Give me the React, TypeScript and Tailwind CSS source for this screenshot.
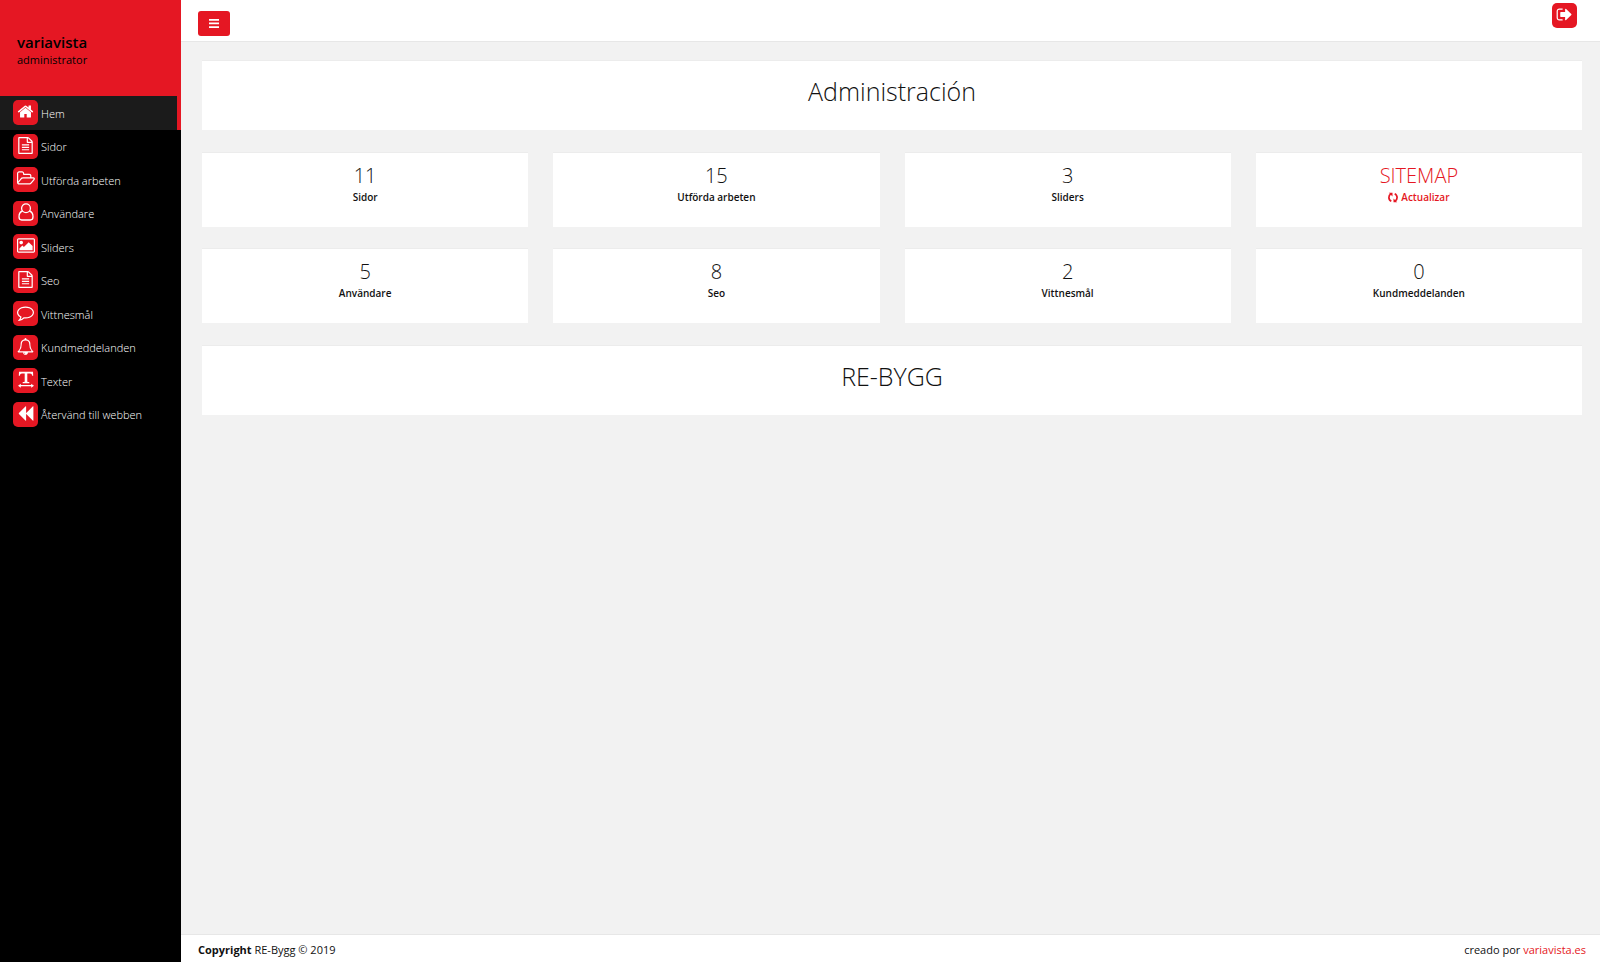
import type { ReactNode } from "react";

function Glyph({ d, box = "0 0 1792 1792", className = "" }: { d: string; box?: string; className?: string }) {
  return (
    <svg viewBox={box} className={`fill-current ${className}`} aria-hidden="true">
      <path d={d} />
    </svg>
  );
}

const FILE =
  "M1596 380q28 28 48 76t20 88v1152q0 40-28 68t-68 28h-1344q-40 0-68-28t-28-68v-1600q0-40 28-68t68-28h896q40 0 88 20t76 48zm-444-244v376h376q-10-29-22-41l-313-313q-12-12-41-22zm384 1528v-1024h-416q-40 0-68-28t-28-68v-416h-768v1536h1280zm-1024-864q0-14 9-23t23-9h704q14 0 23 9t9 23v64q0 14-9 23t-23 9h-704q-14 0-23-9t-9-23v-64zm736 224q14 0 23 9t9 23v64q0 14-9 23t-23 9h-704q-14 0-23-9t-9-23v-64q0-14 9-23t23-9h704zm0 256q14 0 23 9t9 23v64q0 14-9 23t-23 9h-704q-14 0-23-9t-9-23v-64q0-14 9-23t23-9h704z";
const HOME =
  "M1472 992v480q0 26-19 45t-45 19h-384v-384h-256v384h-384q-26 0-45-19t-19-45v-480q0-1 .5-3t.5-3l575-474 575 474q1 2 1 6zm223-69l-62 74q-8 9-21 11h-3q-13 0-21-7l-692-577-692 577q-12 8-24 7-13-2-21-11l-62-74q-8-10-7-23.5t11-21.5l719-599q32-26 76-26t76 26l244 204v-195q0-14 9-23t23-9h192q14 0 23 9t9 23v408l219 182q10 8 11 21.5t-7 23.5z";
const FOLDER =
  "M1845 931q0-35-53-35h-1088q-40 0-85.5 21.5t-71.5 52.5l-294 363q-18 24-18 40 0 35 53 35h1088q40 0 86-22t71-53l294-363q18-22 18-39zm-1141-163h768v-160q0-40-28-68t-68-28h-576q-40 0-68-28t-28-68v-64q0-40-28-68t-68-28h-320q-40 0-68 28t-28 68v853l256-315q44-53 116-87.5t140-34.5zm1269 163q0 62-46 120l-295 363q-43 53-116 87.5t-140 34.5h-1088q-92 0-158-66t-66-158v-960q0-92 66-158t158-66h320q92 0 158 66t66 158v32h544q92 0 158 66t66 158v160h192q54 0 99 24.5t67 70.5q15 32 15 68z";
const IMAGE =
  "M576 576q0 80-56 136t-136 56-136-56-56-136 56-136 136-56 136 56 56 136zm1024 384v448h-1408v-192l320-320 160 160 512-512zm96-704h-1600q-13 0-22.5 9.5t-9.5 22.5v1216q0 13 9.5 22.5t22.5 9.5h1600q13 0 22.5-9.5t9.5-22.5v-1216q0-13-9.5-22.5t-22.5-9.5zm160 32v1216q0 66-47 113t-113 47h-1600q-66 0-113-47t-47-113v-1216q0-66 47-113t113-47h1600q66 0 113 47t47 113z";
const COMMENT =
  "M896 384q-204 0-381.5 69.5t-282 187.5-104.5 255q0 112 71.5 213.5t201.5 175.5l87 50-27 96q-24 91-70 172 152-63 275-171l43-38 57 6q69 8 130 8 204 0 381.5-69.5t282-187.5 104.5-255-104.5-255-282-187.5-381.5-69.5zm896 512q0 174-120 321.5t-326 233-450 85.5q-70 0-145-8-198 175-460 242-49 14-114 22h-5q-15 0-27-10.5t-16-27.5v-1q-3-4-.5-12t2-10 4.5-9.5l6-9 7-8.5 8-9q7-8 31-34.5t34.5-38 31-39.5 32.5-51 27-59 26-76q-157-89-247.5-220t-90.5-281q0-174 120-321.5t326-233 450-85.5 450 85.5 326 233 120 321.5z";
const BELL =
  "M912 1696q0-16-16-16-59 0-101.5-42.5t-42.5-101.5q0-16-16-16t-16 16q0 73 51.5 124.5t124.5 51.5q16 0 16-16zm-666-288h1300q-266-300-266-832 0-51-24-105t-69-103-121.5-80.5-169.5-31.5-169.5 31.5-121.5 80.5-69 103-24 105q0 532-266 832zm1482 0q0 52-38 90t-90 38h-448q0 106-75 181t-181 75-181-75-75-181h-448q-52 0-90-38t-38-90q50-42 91-88t85-119.5 74.5-158.5 50-206 19.5-260q0-152 117-282.5t307-158.5q-8-19-8-39 0-40 28-68t68-28 68 28 28 68q0 20-8 39 190 28 307 158.5t117 282.5q0 139 19.5 260t50 206 74.5 158.5 85 119.5 91 88z";
const BACKWARD =
  "M1683 141q19-19 32-13t13 32v1472q0 26-13 32t-32-13l-710-710q-9-9-13-19v710q0 26-13 32t-32-13l-710-710q-19-19-19-45t19-45l710-710q19-19 32-13t13 32v710q4-10 13-19z";
const SIGN_OUT =
  "M704 1440q0 4 1 20t.5 26.5-3 23.5-10 19.5-20.5 6.5h-320q-119 0-203.5-84.5t-84.5-203.5v-704q0-119 84.5-203.5t203.5-84.5h320q13 0 22.5 9.5t9.5 22.5q0 4 1 20t.5 26.5-3 23.5-10 19.5-20.5 6.5h-320q-66 0-113 47t-47 113v704q0 66 47 113t113 47h312l11.5 1 11.5 3 8 5.5 7 9 2 13.5zm928-544q0 26-19 45l-544 544q-19 19-45 19t-45-19-19-45v-288h-448q-26 0-45-19t-19-45v-384q0-26 19-45t45-19h448v-288q0-26 19-45t45-19 45 19l544 544q19 19 19 45z";

function UserIcon() {
  return (
    <svg viewBox="0 0 16 18" className="h-[18px] w-4 fill-none stroke-current stroke-[1.3]" aria-hidden="true">
      <circle cx="8" cy="5.2" r="4.4" />
      <path d="M4.6 8C2.4 8.6 1 11 1 13.8c0 1.9 1.1 3.2 2.7 3.2h8.6c1.6 0 2.7-1.3 2.7-3.2 0-2.8-1.4-5.200-3.600-5.800" />
    </svg>
  );
}

function TextWidthIcon() {
  return (
    <svg viewBox="0 0 16 17" className="h-[17px] w-4 fill-current" aria-hidden="true">
      <path d="M1 .8h14l.2 4h-1c-.4-1.600-.8-2.300-2.200-2.300H9.300v7.700c0 .6.600.8 2 .9v1.100H4.700v-1.100c1.400-.1 2-.3 2-.9V2.500H4c-1.400 0-1.800.7-2.200 2.300h-1z" />
      <path d="M0 14.700l2.800-2v1.400h10.400v-1.400l2.800 2-2.800 2v-1.400H2.800v1.400z" />
    </svg>
  );
}

function SyncIcon() {
  return (
    <svg viewBox="0 0 10 11" className="h-[11px] w-2.5 fill-none stroke-current stroke-[1.7]" aria-hidden="true">
      <path d="M3.300 9.300C1.700 8.500.9 7 .9 5.400c0-1.500.7-2.700 1.900-3.500M6.700 1.700c1.600.8 2.400 2.300 2.400 3.900 0 1.500-.7 2.700-1.900 3.500" />
      <path d="M.8.8h3.700v3.700zM9.200 10.200H5.500V6.500z" className="fill-current stroke-none" />
    </svg>
  );
}

const menu: { label: string; icon: ReactNode; active?: boolean }[] = [
  { label: "Hem", icon: <Glyph d={HOME} className="size-[17px]" />, active: true },
  { label: "Sidor", icon: <Glyph d={FILE} className="size-[17px]" /> },
  { label: "Utförda arbeten", icon: <Glyph d={FOLDER} box="64 0 1920 1792" className="h-[17px] w-[18px]" /> },
  { label: "Användare", icon: <UserIcon /> },
  { label: "Sliders", icon: <Glyph d={IMAGE} box="-64 0 1920 1792" className="h-[17px] w-[18px]" /> },
  { label: "Seo", icon: <Glyph d={FILE} className="size-[17px]" /> },
  { label: "Vittnesmål", icon: <Glyph d={COMMENT} className="size-[17px]" /> },
  { label: "Kundmeddelanden", icon: <Glyph d={BELL} className="size-[17px]" /> },
  { label: "Texter", icon: <TextWidthIcon /> },
  { label: "Återvänd till webben", icon: <Glyph d={BACKWARD} className="size-[17px]" /> },
];

const stats = [
  { value: "11", label: "Sidor" },
  { value: "15", label: "Utförda arbeten" },
  { value: "3", label: "Sliders" },
  { value: "SITEMAP", label: "Actualizar", sync: true },
  { value: "5", label: "Användare" },
  { value: "8", label: "Seo" },
  { value: "2", label: "Vittnesmål" },
  { value: "0", label: "Kundmeddelanden" },
];

function Badge({ children }: { children: ReactNode }) {
  return (
    <span className="flex size-[25px] shrink-0 items-center justify-center rounded-[5px] bg-[#e51723] pb-0.5 text-white">
      {children}
    </span>
  );
}

function Banner({ title }: { title: string }) {
  return (
    <section className="border-t border-[#ececec] bg-white pt-3 pb-5 text-center">
      <h1 className="text-[25px] leading-[37px] font-light">{title}</h1>
    </section>
  );
}

export default function App() {
  return (
    <div className="flex min-h-screen bg-[#f2f2f2] font-['Open_Sans',sans-serif] text-[11px] text-[#111]">
      <aside className="w-[181px] shrink-0 bg-black">
        <div className="h-24 bg-[#e51723] px-[17px] pt-[33px] text-black">
          <p className="text-[15px] leading-[18px] font-semibold">variavista</p>
          <p className="leading-[18px]">administrator</p>
        </div>
        <nav>
          <ul className="grid h-[335px] auto-rows-fr">
            {menu.map((item) => (
              <li key={item.label}>
                <a
                  href="#"
                  className={
                    item.active
                      ? "flex h-full items-center gap-[3px] border-r-4 border-[#e51723] bg-[#1b1b1b] pl-[13px] font-light text-white"
                      : "flex h-full items-center gap-[3px] pl-[13px] font-light text-white"
                  }
                >
                  <Badge>{item.icon}</Badge>
                  <span className="pt-0.5">{item.label}</span>
                </a>
              </li>
            ))}
          </ul>
        </nav>
      </aside>

      <div className="flex min-w-0 flex-1 flex-col">
        <header className="flex h-[42px] items-start justify-between border-b border-[#e7e7e7] bg-white pr-[23px] pl-[17px]">
          <button
            type="button"
            aria-label="Menu"
            className="mt-[11px] flex h-[25px] w-8 items-center justify-center rounded-[3px] bg-[#e51723] text-white"
          >
            <svg viewBox="0 0 10 9" className="h-[9px] w-2.5 fill-current" aria-hidden="true">
              <path d="M0 0h10v1.700H0zM0 3.600h10v1.700H0zM0 7.200h10v1.700H0z" />
            </svg>
          </button>
          <a href="#" aria-label="Logout" className="mt-[3px]">
            <Badge>
              <Glyph d={SIGN_OUT} className="size-[17px]" />
            </Badge>
          </a>
        </header>

        <main className="flex flex-1 flex-col gap-[22px] pt-[18px] pr-[18px] pl-[21px]">
          <Banner title="Administración" />
          <div className="grid grid-cols-4 gap-x-[25px] gap-y-[21px]">
            {stats.map((stat) => (
              <a
                key={stat.label}
                href="#"
                className={
                  stat.sync
                    ? "border-t border-[#ececec] bg-white pt-2.5 pb-[22px] text-center text-[#e51723]"
                    : "border-t border-[#ececec] bg-white pt-2.5 pb-[22px] text-center"
                }
              >
                <h2 className="text-xl leading-[26px] font-light">{stat.value}</h2>
                <p className="flex items-center justify-center gap-[3px] text-[10px] leading-4 font-semibold">
                  {stat.sync && <SyncIcon />}
                  {stat.label}
                </p>
              </a>
            ))}
          </div>
          <Banner title="RE-BYGG" />
        </main>

        <footer className="flex h-7 items-center justify-between border-t border-[#e7e7e7] bg-white pt-1 pr-3.5 pl-[17px]">
          <p>
            <strong className="font-bold">Copyright</strong> RE-Bygg © 2019
          </p>
          <p>
            creado por{" "}
            <a href="#" className="text-[#e51723]">
              variavista.es
            </a>
          </p>
        </footer>
      </div>
    </div>
  );
}
